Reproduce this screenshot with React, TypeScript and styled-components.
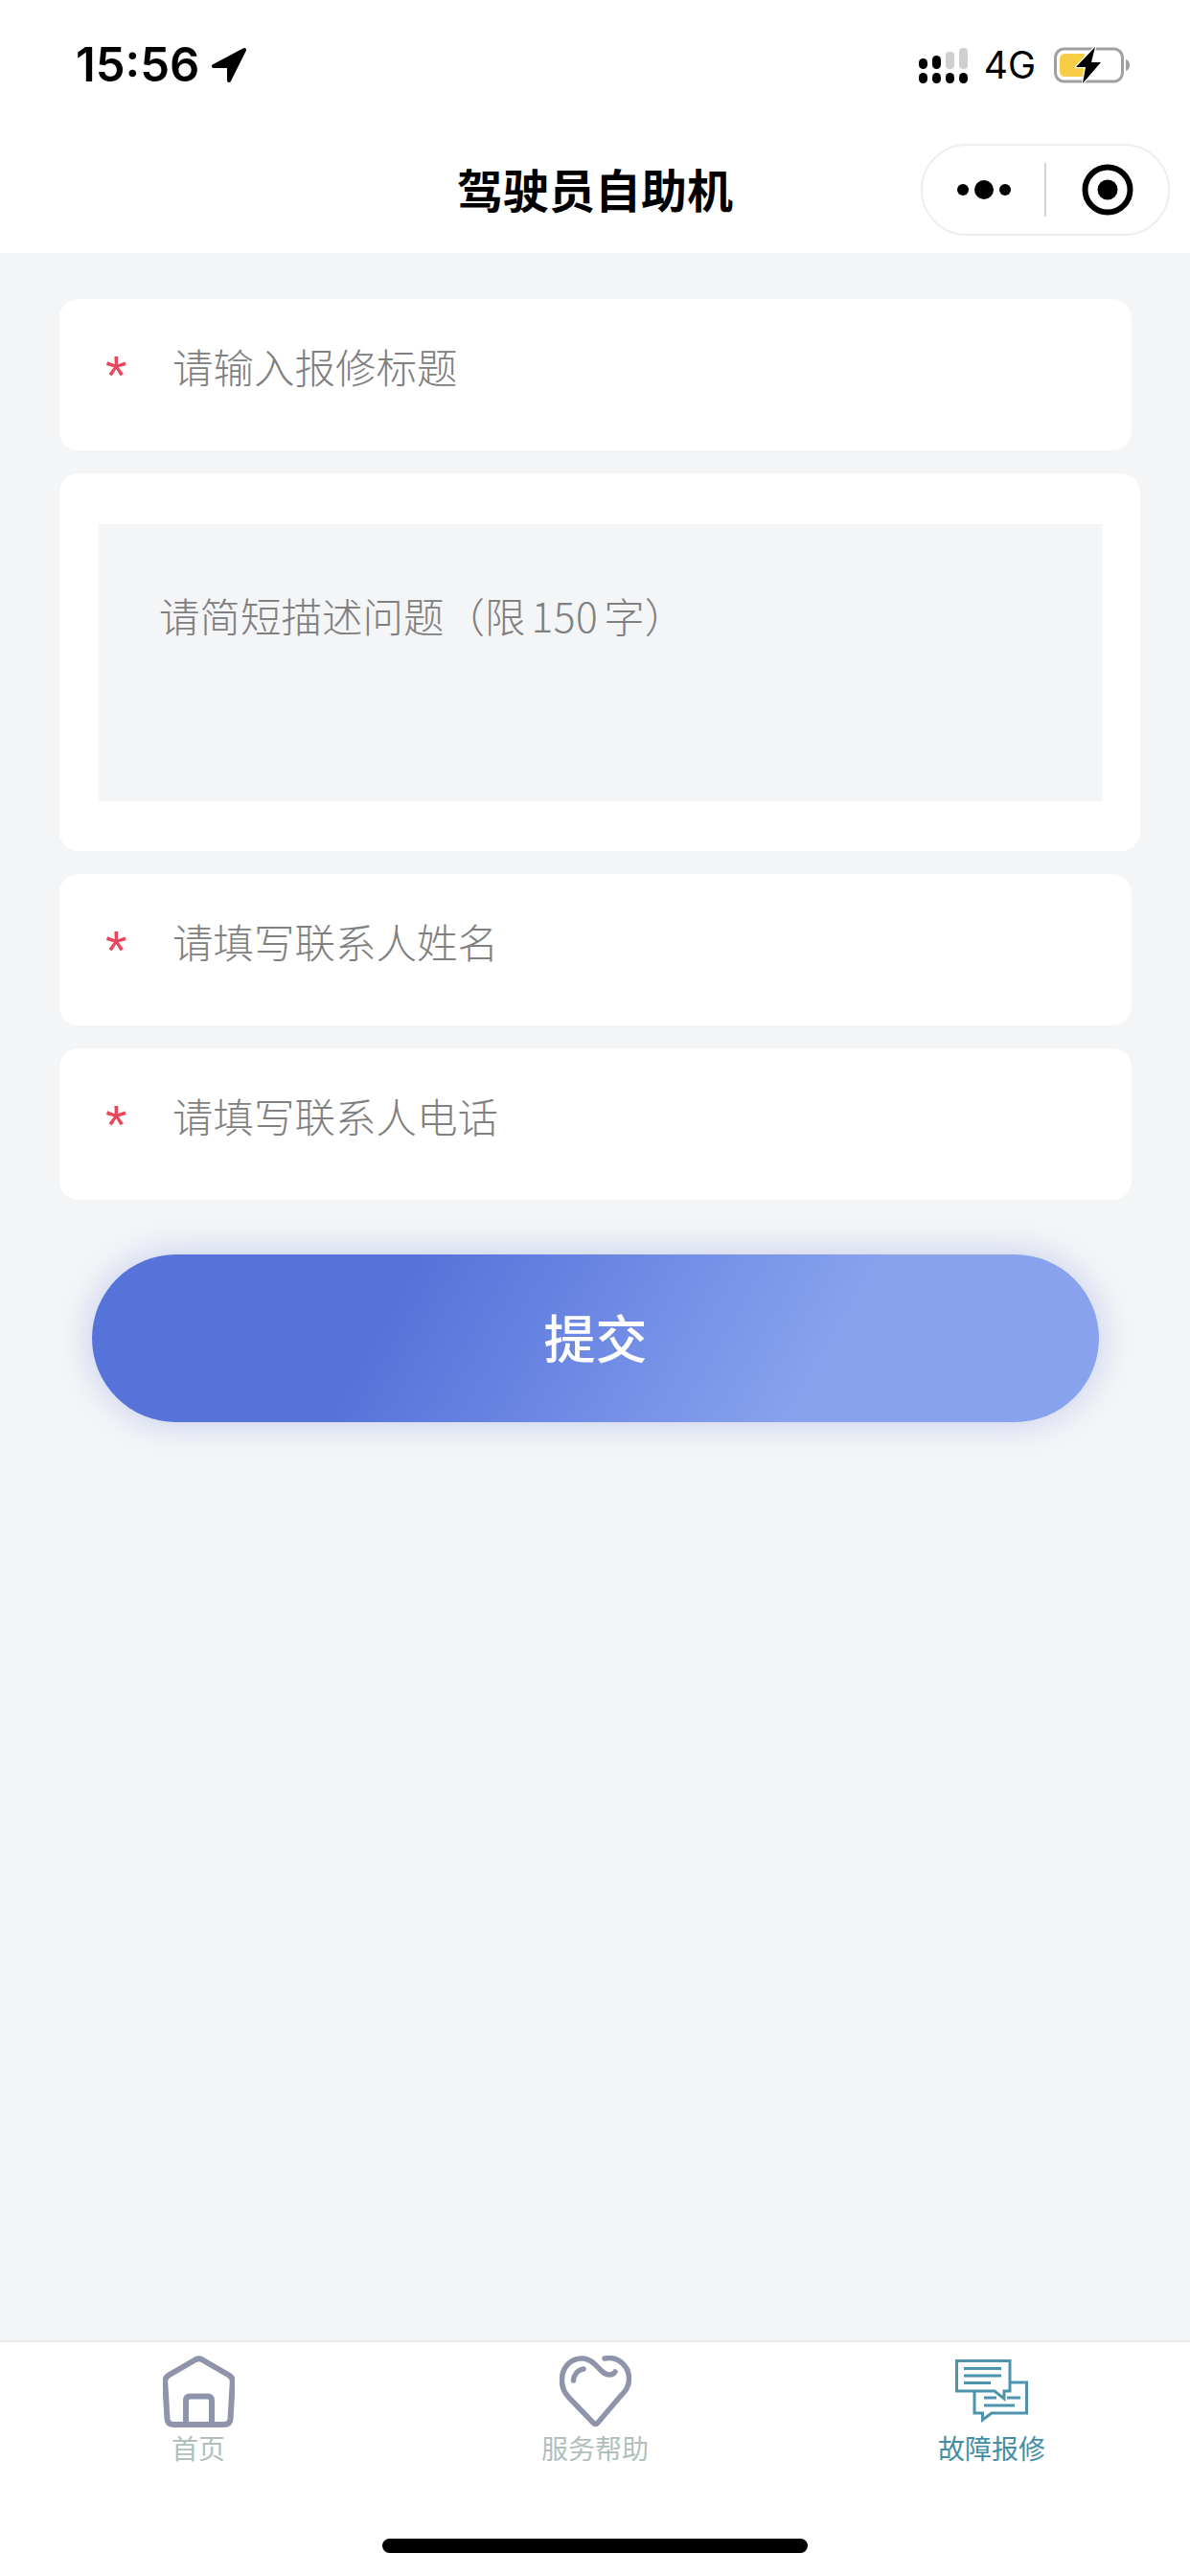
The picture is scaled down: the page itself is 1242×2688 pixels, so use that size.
import styled, { createGlobalStyle } from 'styled-components'

const GlobalStyle = createGlobalStyle`
  * { box-sizing: border-box; }
  html, body { margin: 0; padding: 0; background: #f4f5f7; }
  body { font-family: "Noto Sans CJK SC", "Noto Sans", sans-serif; }
`

const Field = ({ label }: { label: string }) => (
    <FieldCard>
        <Star>*</Star>
        <Placeholder>{label}</Placeholder>
    </FieldCard>
)

const SignalIcon = () => (
    <svg width="52" height="38" viewBox="0 0 52 38">
        <rect x="0" y="12" width="9" height="11" rx="4.5" fill="#000" />
        <rect x="14" y="9" width="9" height="14" rx="4.5" fill="#000" />
        <rect x="28" y="5" width="9" height="18" rx="4" fill="#cfcfcf" />
        <rect x="42" y="1" width="9" height="22" rx="4" fill="#cfcfcf" />
        <rect x="0" y="27" width="9" height="11" rx="4.5" fill="#000" />
        <rect x="14" y="27" width="9" height="11" rx="4.5" fill="#000" />
        <rect x="28" y="27" width="9" height="11" rx="4.5" fill="#000" />
        <rect x="42" y="27" width="9" height="11" rx="4.5" fill="#000" />
    </svg>
)

const BatteryIcon = () => (
    <svg width="80" height="38" viewBox="0 0 80 38">
        <rect x="1.5" y="2" width="70" height="34" rx="9" fill="none" stroke="#a0a0a0" strokeWidth="3" />
        <path d="M75 13 C78 14 79 16 79 19 C79 22 78 24 75 25 Z" fill="#a0a0a0" />
        <path d="M12 7 H32 V31 H12 Q6 31 6 25 V13 Q6 7 12 7 Z" fill="#f6cd44" />
        <path d="M43 0 L23 21 H33 L30 38 L49 16 H39 Z" fill="#000" stroke="#fff" strokeWidth="2.5" strokeLinejoin="round" paintOrder="stroke" />
    </svg>
)

const HomeIcon = () => (
    <svg width="75" height="75" viewBox="0 0 75 75" fill="none" stroke="#9094ab" strokeWidth="6" strokeLinejoin="round">
        <path d="M34.5 4 Q37.5 2.5 40.5 4 L69 20.5 Q73 23 72.8 27 L70.5 66 Q70 72 63.5 72 H11.5 Q5 72 4.5 66 L2.2 27 Q2 23 6 20.5 Z" />
        <path d="M24 72 V47 Q24 42.5 28.5 42.5 H46.5 Q51 42.5 51 47 V72" />
    </svg>
)

const HeartIcon = () => (
    <svg width="75" height="75" viewBox="0 0 75 75" fill="none" stroke="#9094ab" strokeWidth="5.5" strokeLinecap="round" strokeLinejoin="round">
        <path d="M47 3 C62 0 73 12 72.5 25 C72.5 33 68 38 63 43 L40 70 Q37.5 72.5 35 70 L10 44 C4 38 2 32 2.5 24 C3 11 13 2 25 3 C38 4 42 20 52 20 Q56 20 58 17" />
        <path d="M14.5 26 C15 20 19 15 25 14" />
    </svg>
)

const ReportIcon = () => (
    <svg width="76" height="66" viewBox="0 0 76 66" fill="none" stroke="#4d93ab" strokeWidth="3">
        <path d="M1.5 1.5 H57 V33 H51 V41 L41 33 H1.5 Z" />
        <path d="M57 24 H74.5 V56 H38 L28.5 63 V56 H20 V33" />
        <path d="M9 9.5 H48 M9 17 H48 M9 24.5 H37 M30 40 H43 M54 40 H68 M30 48 H62" />
    </svg>
)

const App = () => {
    return (
        <Page>
            <GlobalStyle />
            <Header>
                <StatusBar>
                    <TimeBox>
                        <Time>15:56</Time>
                        <svg width="38" height="38" viewBox="0 0 38 38">
                            <path d="M35 3 L3 20 H19 V35 Z" fill="#000" stroke="#000" strokeWidth="4" strokeLinejoin="round" />
                        </svg>
                    </TimeBox>
                    <StatusRight>
                        <SignalIcon />
                        <Network>4G</Network>
                        <BatteryIcon />
                    </StatusRight>
                </StatusBar>
                <NavBar>
                    <span />
                    <Title>驾驶员自助机</Title>
                    <Capsule>
                        <MenuButton>
                            <svg width="56" height="22" viewBox="0 0 56 22">
                                <circle cx="6" cy="11" r="6" fill="#000" />
                                <circle cx="28" cy="11" r="10" fill="#000" />
                                <circle cx="50" cy="11" r="6" fill="#000" />
                            </svg>
                        </MenuButton>
                        <CapsuleLine />
                        <MenuButton>
                            <svg width="54" height="54" viewBox="0 0 54 54">
                                <circle cx="27" cy="27" r="23.5" fill="none" stroke="#000" strokeWidth="6" />
                                <circle cx="27" cy="27" r="10.5" fill="#000" />
                            </svg>
                        </MenuButton>
                    </Capsule>
                </NavBar>
            </Header>

            <Main>
                <Field label="请输入报修标题" />
                <TextCard>
                    <TextArea>
                        <AreaText>请简短描述问题（限<Digits>150</Digits>字）</AreaText>
                    </TextArea>
                </TextCard>
                <Field label="请填写联系人姓名" />
                <Field label="请填写联系人电话" />
                <SubmitButton>提交</SubmitButton>
            </Main>

            <TabBar>
                <Tab>
                    <TabIcon><HomeIcon /></TabIcon>
                    <TabLabel>首页</TabLabel>
                </Tab>
                <Tab>
                    <TabIcon><HeartIcon /></TabIcon>
                    <TabLabel>服务帮助</TabLabel>
                </Tab>
                <Tab>
                    <TabIcon><ReportIcon /></TabIcon>
                    <TabLabel $active>故障报修</TabLabel>
                </Tab>
                <HomeIndicator />
            </TabBar>
        </Page>
    )
}

export default App

const Page = styled.div`
width: 1242px;
height: 2688px;
display: flex;
flex-direction: column;
background-color: #f4f5f7;
overflow: hidden;
`

const Header = styled.div`
background-color: white;
`

const StatusBar = styled.div`
height: 132px;
padding: 4px 62px 0 79px;
display: flex;
align-items: center;
justify-content: space-between;
`

const TimeBox = styled.div`
display: flex;
align-items: center;
gap: 12px;
`

const Time = styled.div`
font-family: Inter, "Liberation Sans", sans-serif;
font-size: 49px;
font-weight: 600;
line-height: 60px;
color: #000;
`

const StatusRight = styled.div`
display: flex;
align-items: center;
gap: 16px;
`

const Network = styled.div`
margin-right: 3px;
font-family: Inter, "Liberation Sans", sans-serif;
font-size: 39px;
line-height: 46px;
color: #000;
`

const NavBar = styled.div`
height: 132px;
display: grid;
grid-template-columns: 1fr auto 1fr;
align-items: center;
`

const Title = styled.div`
padding-bottom: 5px;
font-size: 48px;
font-weight: 700;
line-height: 60px;
color: #000;
`

const Capsule = styled.div`
justify-self: end;
margin-right: 21px;
width: 260px;
height: 96px;
border: 2px solid #eeeeee;
border-radius: 48px;
display: flex;
align-items: center;
`

const MenuButton = styled.div`
flex: 1;
display: flex;
align-items: center;
justify-content: center;
`

const CapsuleLine = styled.div`
width: 2px;
height: 56px;
background-color: #d4d4d4;
`

const Main = styled.div`
flex: 1;
padding: 48px 0 0 62px;
display: flex;
flex-direction: column;
align-items: flex-start;
gap: 24px;
`

const FieldCard = styled.div`
width: 1119px;
height: 158px;
padding: 40px 0 0 48px;
background-color: white;
border-radius: 20px;
display: flex;
align-items: flex-start;
`

const Star = styled.div`
width: 70px;
font-family: "Liberation Sans", sans-serif;
font-size: 58px;
font-weight: 300;
line-height: 60px;
padding-top: 10px;
color: #e8465c;
`

const Placeholder = styled.div`
font-size: 42.5px;
font-weight: 300;
line-height: 60px;
color: #808080;
`

const TextCard = styled.div`
width: 1128px;
height: 394px;
padding: 53px 39px 52px 41px;
background-color: white;
border-radius: 20px;
`

const TextArea = styled.div`
width: 100%;
height: 100%;
padding: 65px 0 0 63px;
background-color: #f4f5f7;
`

const AreaText = styled.div`
font-size: 42.5px;
font-weight: 300;
line-height: 60px;
color: #808080;
`

const Digits = styled.span`
margin: 0 6px;
letter-spacing: 0.5px;
`

const SubmitButton = styled.div`
width: 1051px;
height: 175px;
margin: 33px 0 0 34px;
padding-bottom: 4px;
border-radius: 88px;
background: linear-gradient(120deg, #5673da 0%, #5673da 30%, #88a2ee 72%, #88a2ee 100%);
box-shadow: 0 0 36px rgba(86, 115, 218, 0.32);
display: flex;
align-items: center;
justify-content: center;
font-size: 54px;
font-weight: 500;
color: white;
`

const TabBar = styled.div`
position: relative;
height: 246px;
padding-top: 13px;
background-color: white;
border-top: 2px solid #e8e8e8;
display: grid;
grid-template-columns: repeat(3, 1fr);
align-items: start;
`

const Tab = styled.div`
display: flex;
flex-direction: column;
align-items: center;
`

const TabIcon = styled.div`
height: 76px;
display: flex;
align-items: center;
justify-content: center;
`

const TabLabel = styled.div<{ $active?: boolean }>`
margin-top: 1px;
font-size: 28px;
line-height: 40px;
color: ${(props) => (props.$active ? '#428ea4' : '#b0bfbc')};
`

const HomeIndicator = styled.div`
position: absolute;
left: 399px;
bottom: 24px;
width: 444px;
height: 15px;
border-radius: 8px;
background-color: #000;
`
